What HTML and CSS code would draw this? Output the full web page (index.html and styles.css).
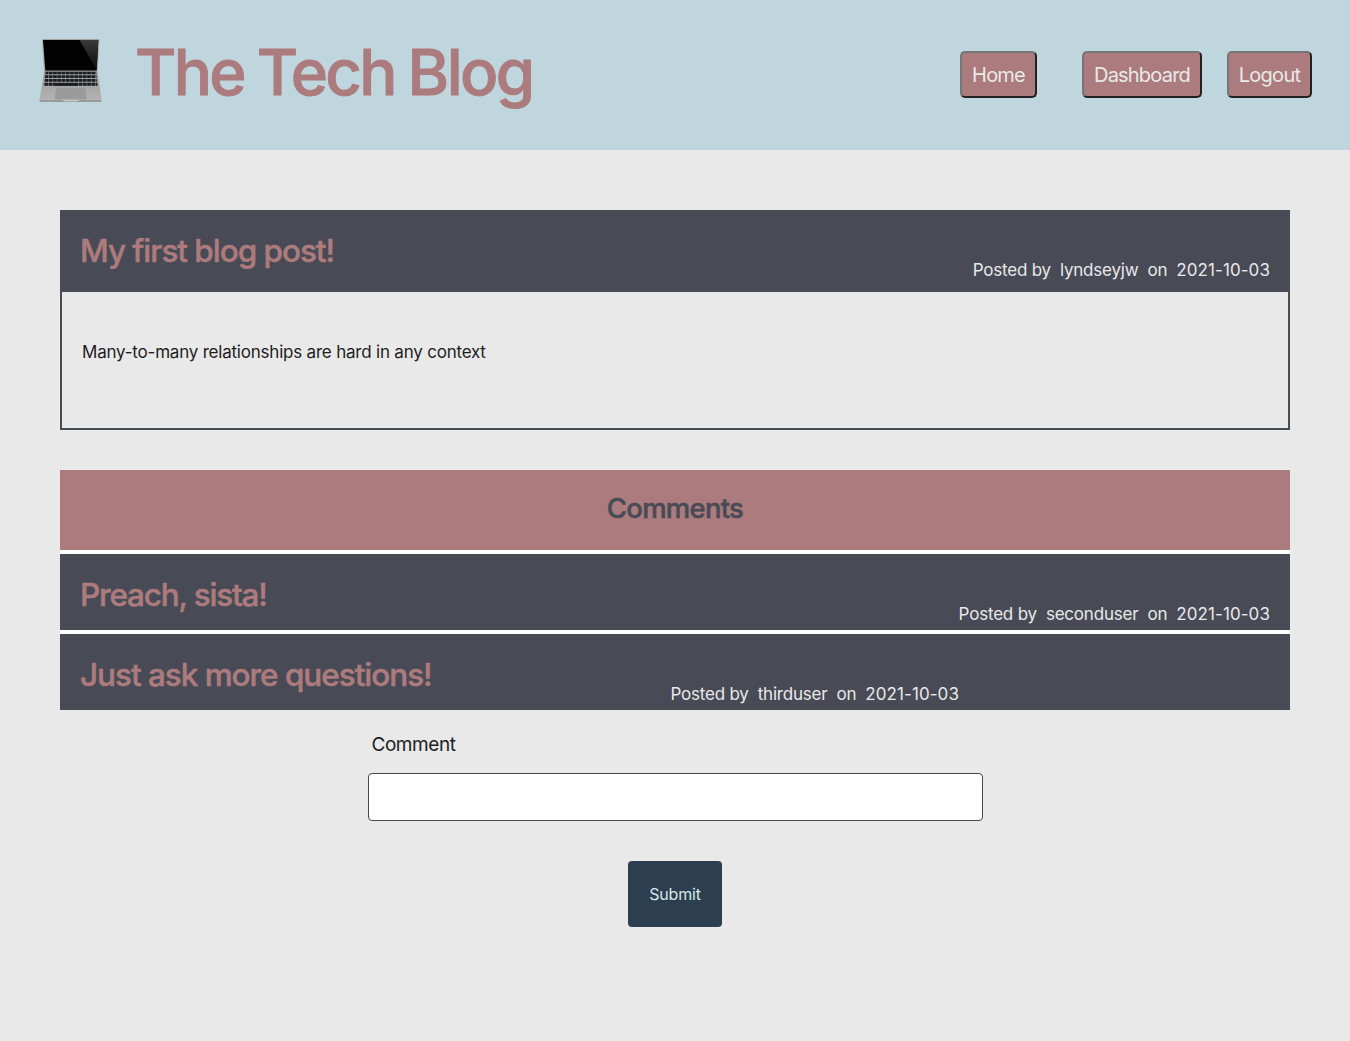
FILE: index.html
```html
<!DOCTYPE html>
<html lang="en">
<head>
<meta charset="utf-8">
<title>The Tech Blog</title>
<link rel="stylesheet" href="styles.css">
</head>
<body>
<header class="site-header">
  <svg class="laptop" viewBox="0 0 255 255" aria-hidden="true">
    <defs>
      <linearGradient id="glare" x1="0" y1="0" x2="0" y2="1"><stop offset="0" stop-color="#3a3a3a"/><stop offset="1" stop-color="#0c0c0c"/></linearGradient>
      <linearGradient id="deck" x1="0" y1="0" x2="0" y2="1"><stop offset="0" stop-color="#999"/><stop offset="1" stop-color="#b5b5b5"/></linearGradient>
      <pattern id="keys" x="44" width="12.8" height="255" patternUnits="userSpaceOnUse"><path d="M0 0h11.4v255H0z" fill="#1b1c1f"/></pattern>
    </defs>
    <path d="M36 27h172l-5 96H42z" fill="#a8a29e"/>
    <path d="M39 30h166l-5 92H46z" fill="#020202"/>
    <path d="M149 30h56l-5 90z" fill="url(#glare)"/>
    <path d="M43 122h159l13 89-3 5H30l-2-5z" fill="url(#deck)"/>
    <path d="M47 125h151l1 8H46zM45 136h154l1 8H44zM44 147h156l1 8H43zM42 158h160l1 9H41z" fill="url(#keys)"/>
    <path d="M77 159h66v8H76z" fill="#1b1c1f"/>
    <path d="M78 173h88l4 35H74z" fill="#9b9b9b" stroke="#aaa"/>
    <path d="M28 210h187l-3 6H31z" fill="#9a9a9a"/>
    <path d="M98 210h49l-4 4h-41z" fill="#c9c9c9"/>
  </svg>
  <h1 class="site-title">The Tech Blog</h1>
  <nav class="nav">
    <button class="nav-button nav-home">Home</button>
    <button class="nav-button nav-dashboard">Dashboard</button>
    <button class="nav-button nav-logout">Logout</button>
  </nav>
</header>
<main class="content">
  <article class="post">
    <div class="bar post-bar">
      <h2 class="bar-title">My first blog post!</h2>
      <p class="byline"><span>Posted by</span><span>lyndseyjw</span><span>on</span><span class="date">2021-10-03</span></p>
    </div>
    <p class="post-body">Many-to-many relationships are hard in any context</p>
  </article>
  <section class="comments">
    <h3 class="comments-title">Comments</h3>
    <div class="bar">
      <h2 class="bar-title bar-title-tight">Preach, sista!</h2>
      <p class="byline"><span>Posted by</span><span>seconduser</span><span>on</span><span class="date">2021-10-03</span></p>
    </div>
    <div class="bar bar-inset">
      <h2 class="bar-title">Just ask more questions!</h2>
      <p class="byline"><span>Posted by</span><span>thirduser</span><span>on</span><span class="date">2021-10-03</span></p>
    </div>
  </section>
  <form class="comment-form">
    <label class="comment-label" for="comment">Comment</label>
    <input class="comment-input" id="comment" type="text">
    <button class="submit" type="button">Submit</button>
  </form>
</main>
</body>
</html>
```
FILE: styles.css
```css
* { box-sizing: border-box; }
body {
  margin: 0;
  min-height: 1041px;
  background: #e9e9e9;
  color: #1d1d1d;
  font-family: Inter, "Liberation Sans", sans-serif;
  font-size: 17px;
}
h1, h2, h3, p { margin: 0; }
button, input { font-family: inherit; }
.site-header {
  display: flex;
  height: 150px;
  padding: 30px 38px 0 30px;
  background: #c0d6de;
}
.laptop { width: 85px; height: 85px; }
.site-title {
  margin-left: 20px;
  color: #ac7b7d;
  font-size: 63.5px;
  font-weight: 500;
  -webkit-text-stroke: 0.9px #ac7b7d;
  line-height: 83px;
  letter-spacing: -2.65px;
  word-spacing: -1.5px;
  white-space: nowrap;
}
.nav {
  display: flex;
  margin-left: auto;
  padding-top: 21px;
}
.nav-button {
  height: 47px;
  padding: 1px 0 0;
  border: 2px solid;
  border-color: #767676 #212121 #212121 #767676;
  border-radius: 5px;
  background: #ac7b7d;
  color: #e9e9e9;
  font-size: 20px;
  line-height: 42px;
  letter-spacing: -0.8px;
}
.nav-home { width: 77px; margin-right: 45px; }
.nav-dashboard { width: 120px; margin-right: 25px; }
.nav-logout { width: 85px; letter-spacing: -0.7px; }
.content { padding: 60px 60px 0; }
.post {
  height: 220px;
  border: 2px solid #484a55;
}
.bar {
  display: flex;
  justify-content: space-between;
  height: 76px;
  padding: 20px 20px 0;
  background: #484a55;
}
.post-bar { height: 80px; padding: 18px 18px 0; }
.bar-title {
  color: #ac7b7d;
  font-size: 31.5px;
  font-weight: 500;
  -webkit-text-stroke: 0.5px #ac7b7d;
  line-height: 41px;
  letter-spacing: -1.04px;
  white-space: nowrap;
}
.bar-title-tight { letter-spacing: -1.2px; }
.byline {
  display: flex;
  gap: 9px;
  padding-top: 29px;
  color: #e9e9e9;
  line-height: 22px;
  letter-spacing: -0.2px;
  white-space: nowrap;
}
.date { letter-spacing: 0.08px; }
.post-body {
  padding: 49px 20px;
  line-height: 22px;
  letter-spacing: -0.21px;
}
.comments {
  display: flex;
  flex-direction: column;
  gap: 4px;
  margin-top: 40px;
  background: #fff;
}
.comments-title {
  height: 80px;
  background: #ac7b7d;
  color: #484a55;
  font-size: 27.5px;
  font-weight: 500;
  -webkit-text-stroke: 0.5px #484a55;
  line-height: 76px;
  letter-spacing: -0.75px;
  text-align: center;
}
.bar-inset { padding-right: 331px; }
.comment-form {
  display: flex;
  flex-direction: column;
  width: 615px;
  margin: 23px auto 0;
}
.comment-label {
  padding-left: 4px;
  font-size: 19px;
  line-height: 24px;
  letter-spacing: -0.45px;
}
.comment-input {
  height: 48px;
  margin-top: 16px;
  border: 1px solid #484848;
  border-radius: 4px;
  background: #fff;
}
.submit {
  align-self: center;
  width: 94px;
  height: 66px;
  margin-top: 40px;
  padding: 0;
  border: 0;
  border-radius: 4px;
  background: #2c3e50;
  color: #d5e9e7;
  font-size: 16px;
  letter-spacing: -0.15px;
}
```
